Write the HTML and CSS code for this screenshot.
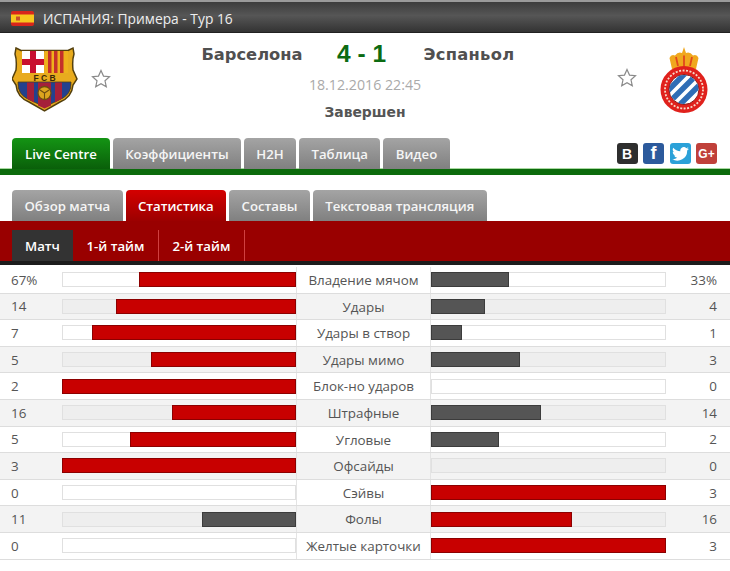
FILE: index.html
```html
<!DOCTYPE html>
<html lang="ru">
<head>
<meta charset="utf-8">
<title>Барселона 4 - 1 Эспаньол</title>
<link rel="stylesheet" href="styles.css">
</head>
<body>
<div class="page">
  <div class="league">
    <svg class="flag" width="23" height="15" viewBox="0 0 23 15"><rect width="23" height="15" rx="2" fill="#d8261c"/><rect y="3.500" width="23" height="8" fill="#f7c81e"/><rect x="5" y="5.500" width="4" height="4" fill="#c8502a"/></svg>
    <span>ИСПАНИЯ: Примера - Тур 16</span>
  </div>
  <div class="match">
    <svg class="crest-home" width="66" height="66" viewBox="0 0 66 66">
      <path d="M4 2 L9 4.500 H56 L61 2 L62 8 Q60 14 61 24 L65 33 L61 39 Q60 51 48 56 L32.500 65 L17 56 Q5 51 4 39 L0 33 L4 24 Q5 14 3 8 Z" fill="#e8ab1e" stroke="#54400e" stroke-width="1.500"/>
      <rect x="10" y="5" width="22" height="22" fill="#fff"/>
      <path d="M18 5h6v8h8v6h-8v8h-6v-8h-8v-6h8z" fill="#c8102e"/>
      <rect x="33" y="5" width="23" height="22" fill="#eeb11c"/>
      <path d="M36 5h3.500v22H36zM42 5h3.500v22H42zM48 5h3.500v22H48z" fill="#c4302a"/>
      <text x="32.500" y="34.500" class="fcb">F C B</text>
      <path d="M6 36 H59 Q60 49 47 54 L32.500 61 L18 54 Q5 49 6 36 Z" fill="#23418e" stroke="#54400e" stroke-width=".8"/>
      <path d="M15 36.500h7v20l-7-4zM43 36.500h7v16l-7 4z" fill="#a5203a"/>
      <path d="M26 36.500h13v23l-6.500 3-6.500-3z" fill="#a5203a"/>
      <circle cx="32.500" cy="47" r="6.500" fill="#dca51e" stroke="#6e4e10" stroke-width="1.300"/>
      <path d="M28 44l4.500 3 4.500-3M32.500 47v6" stroke="#6e4e10" stroke-width="1.100" fill="none"/>
    </svg>
    <svg class="star star-home" width="20" height="20" viewBox="0 0 20 20"><path d="M10 1.500l2.500 5.600 6 .6-4.500 4.100 1.300 6L10 14.700 4.700 17.800l1.300-6L1.500 7.700l6-.6z" fill="#fff" stroke="#8a8a8a" stroke-width="1.200"/></svg>
    <div class="score-box">
      <div class="teams">
        <span class="team team-a">Барселона</span>
        <span class="score">4 - 1</span>
        <span class="team team-b">Эспаньол</span>
      </div>
      <div class="date">18.12.2016 22:45</div>
      <div class="status">Завершен</div>
    </div>
    <svg class="star star-away" width="20" height="20" viewBox="0 0 20 20"><path d="M10 1.500l2.500 5.600 6 .6-4.500 4.100 1.300 6L10 14.700 4.700 17.800l1.300-6L1.500 7.700l6-.6z" fill="#fff" stroke="#8a8a8a" stroke-width="1.200"/></svg>
    <svg class="crest-away" width="48" height="67" viewBox="0 0 48 67">
      <path d="M12 23 L9.500 12 Q11 8 15 9.500 Q18 5.500 22 7 L24 1 L26 7 Q30 5.500 33 9.500 Q37 8 38.500 12 L36 23 Z" fill="#f0a81e"/>
      <path d="M16 11l2 9M24 9.500v10.500M32 11l-2 9" stroke="#e2481c" stroke-width="1.800"/>
      <circle cx="24" cy="43.500" r="23.500" fill="#e0211c"/>
      <circle cx="24" cy="43.500" r="15" fill="#fff" stroke="#8c1512" stroke-width="1"/>
      <clipPath id="c"><circle cx="24" cy="43.500" r="14.500"/></clipPath>
      <g clip-path="url(#c)" stroke="#2f6db5" stroke-width="5.500">
        <path d="M6 46.500 L26 26.500M13 52.500 L33 32.500M20 58.500 L40 38.500"/>
      </g>
      <circle cx="24" cy="43.500" r="19" fill="none" stroke="#f7d9c8" stroke-width="1.800" stroke-dasharray="2 1.500"/>
    </svg>
  </div>
  <div class="main-tabs">
    <div class="tabs">
      <span class="tab tab-green">Live Centre</span>
      <span class="tab">Коэффициенты</span>
      <span class="tab">H2H</span>
      <span class="tab">Таблица</span>
      <span class="tab">Видео</span>
    </div>
    <div class="social">
      <span class="soc soc-vk">B</span>
      <span class="soc soc-fb">f</span>
      <span class="soc soc-tw"><svg width="17" height="14" viewBox="0 0 24 20"><path d="M24 2.400a9.800 9.800 0 0 1-2.800.8A4.900 4.900 0 0 0 23.300.5a9.800 9.800 0 0 1-3.100 1.200A4.900 4.900 0 0 0 11.800 6.100 14 14 0 0 1 1.700 1a4.900 4.900 0 0 0 1.500 6.500 4.900 4.900 0 0 1-2.200-.6 4.900 4.900 0 0 0 3.900 4.900 4.900 4.900 0 0 1-2.200.1 4.900 4.900 0 0 0 4.600 3.400A9.900 9.900 0 0 1 0 17.300 14 14 0 0 0 21.500 4.900 10 10 0 0 0 24 2.400z" fill="#fff"/></svg></span>
      <span class="soc soc-gp">G+</span>
    </div>
  </div>
  <div class="sub-tabs">
    <span class="tab">Обзор матча</span>
    <span class="tab tab-red">Статистика</span>
    <span class="tab">Составы</span>
    <span class="tab">Текстовая трансляция</span>
  </div>
  <div class="band">
    <span class="period period-active">Матч</span>
    <span class="period">1-й тайм</span>
    <span class="period">2-й тайм</span>
  </div>
  <div class="stats">
    <div class="row"><span class="val">67%</span><div class="track track-l"><i class="fill red" style="width:67%"></i></div><span class="name">Владение мячом</span><div class="track"><i class="fill gray" style="width:33%"></i></div><span class="val val-r">33%</span></div>
    <div class="row"><span class="val">14</span><div class="track track-l"><i class="fill red" style="width:77%"></i></div><span class="name">Удары</span><div class="track"><i class="fill gray" style="width:23%"></i></div><span class="val val-r">4</span></div>
    <div class="row"><span class="val">7</span><div class="track track-l"><i class="fill red" style="width:87%"></i></div><span class="name">Удары в створ</span><div class="track"><i class="fill gray" style="width:13%"></i></div><span class="val val-r">1</span></div>
    <div class="row"><span class="val">5</span><div class="track track-l"><i class="fill red" style="width:62%"></i></div><span class="name">Удары мимо</span><div class="track"><i class="fill gray" style="width:38%"></i></div><span class="val val-r">3</span></div>
    <div class="row"><span class="val">2</span><div class="track track-l"><i class="fill red" style="width:100%"></i></div><span class="name">Блок-но ударов</span><div class="track"></div><span class="val val-r">0</span></div>
    <div class="row"><span class="val">16</span><div class="track track-l"><i class="fill red" style="width:53%"></i></div><span class="name">Штрафные</span><div class="track"><i class="fill gray" style="width:47%"></i></div><span class="val val-r">14</span></div>
    <div class="row"><span class="val">5</span><div class="track track-l"><i class="fill red" style="width:71%"></i></div><span class="name">Угловые</span><div class="track"><i class="fill gray" style="width:29%"></i></div><span class="val val-r">2</span></div>
    <div class="row"><span class="val">3</span><div class="track track-l"><i class="fill red" style="width:100%"></i></div><span class="name">Офсайды</span><div class="track"></div><span class="val val-r">0</span></div>
    <div class="row"><span class="val">0</span><div class="track track-l"></div><span class="name">Сэйвы</span><div class="track"><i class="fill red" style="width:100%"></i></div><span class="val val-r">3</span></div>
    <div class="row"><span class="val">11</span><div class="track track-l"><i class="fill gray" style="width:40%"></i></div><span class="name">Фолы</span><div class="track"><i class="fill red" style="width:60%"></i></div><span class="val val-r">16</span></div>
    <div class="row"><span class="val">0</span><div class="track track-l"></div><span class="name">Желтые карточки</span><div class="track"><i class="fill red" style="width:100%"></i></div><span class="val val-r">3</span></div>
  </div>
</div>
</body>
</html>
```
FILE: styles.css
```css
* { box-sizing: border-box; }
html, body { margin: 0; padding: 0; background: #fff; }
body { font-family: "Open Sans", "Liberation Sans", sans-serif; color: #555; overflow: hidden; }
.page { width: 730px; height: 571px; display: flex; flex-direction: column; }

.league { height: 33px; flex: none; display: flex; align-items: center; gap: 9px; padding: 2px 0 0 11px; border-top: 2px solid #9a9a9a; border-bottom: 1px solid #222; background: linear-gradient(#3c3c3c, #565656 45%, #333); color: #eee; font-size: 13.800px; }
.flag { flex: none; }

.match { height: 105px; flex: none; display: flex; padding: 13px 0 0 12px; }
.crest-home { flex: none; }
.fcb { font-family: "Liberation Sans", sans-serif; font-weight: 700; font-size: 8.500px; fill: #3a2a08; text-anchor: middle; }
.star { flex: none; }
.star-home { margin: 23px 0 0 13px; }
.star-away { margin: 22px 0 0 2px; }
.crest-away { flex: none; margin: 0 0 0 23px; }
.score-box { width: 504px; flex: none; display: flex; flex-direction: column; align-items: center; }
.teams { display: flex; align-items: center; height: 24px; margin-top: -4px; }
.team { font-family: "DejaVu Sans", sans-serif; font-weight: 700; font-size: 16.300px; color: #505050; width: 120px; }
.team-a { text-align: right; margin-right: 7px; }
.team-b { text-align: left; margin-left: 10px; letter-spacing: .3px; }
.score { font-family: "Liberation Sans", sans-serif; font-weight: 700; font-size: 24.500px; color: #0c6b12; width: 104px; text-align: center; }
.date { font-size: 14.200px; color: #aaa; margin-top: 9px; padding-left: 4px; }
.status { font-family: "DejaVu Sans", sans-serif; font-weight: 700; font-size: 13.900px; color: #555; margin-top: 10px; padding-left: 4px; }

.main-tabs { flex: none; height: 37px; display: flex; justify-content: space-between; border-bottom: 6px solid #0c6b0c; padding: 0 13px 0 12px; box-shadow: inset 0 -1px 0 #a8d8a0; }
.tabs, .sub-tabs { display: flex; gap: 3px; align-items: flex-start; }
.tab { height: 31px; padding: 0 12.400px; display: flex; align-items: center; border-radius: 4px 4px 0 0; background: linear-gradient(#a4a4a4, #808080); color: #f5f5f5; font-size: 13.200px; font-weight: 600; white-space: nowrap; }
.tab-green { padding: 0 13px; background: linear-gradient(#149414, #0a5f0a); color: #fff; }
.tab-red { background: linear-gradient(#d40000, #9c0000); color: #fff; }
.social { display: flex; gap: 5.500px; padding-top: 5px; }
.soc { width: 21px; height: 21px; border-radius: 3px; display: flex; align-items: center; justify-content: center; color: #fff; font-family: "Liberation Sans", sans-serif; font-weight: 700; font-size: 14px; }
.soc-vk { background: #2e2e2e; }
.soc-fb { background: #2c5a9c; font-size: 18px; }
.soc-tw { background: #2ba1d8; }
.soc-gp { background: #c0403a; font-size: 12px; }

.sub-tabs { flex: none; height: 31px; margin-top: 15px; padding-left: 12px; }
.band { flex: none; height: 44px; display: flex; padding: 9px 0 0 12px; background: #990000; border-bottom: 4px solid #1c1c1c; }
.period { height: 31px; padding: 0 13.500px; display: flex; align-items: center; color: #fff; font-size: 13.200px; font-weight: 600; border-right: 1px solid #d04040; }
.period-active { width: 61px; padding: 0 0 0 13px; background: #333; border: 0; }

.stats { flex: none; padding-top: 2px; }
.row { height: 26.600px; display: flex; align-items: center; border-bottom: 1px solid #ddd; font-size: 13.400px; }
.row:nth-child(even) { background: #f3f3f3; }
.val { width: 62px; padding-left: 11px; flex: none; color: #555; }
.val-r { width: 64px; padding: 0 13px 0 0; text-align: right; }
.track { width: 235px; height: 15px; flex: none; display: flex; background: #fff; box-shadow: inset 0 0 0 1px #e0e0e0; }
.row:nth-child(even) .track { background: #eee; }
.track-l { justify-content: flex-end; width: 234px; }
.fill { display: block; height: 15px; }
.red { background: #c80000; box-shadow: inset 0 0 0 1px #8c0000; }
.gray { background: #555; box-shadow: inset 0 0 0 1px #3c3c3c; }
.name { width: 135px; height: 100%; flex: none; text-align: center; line-height: 26px; color: #555; white-space: nowrap; border-left: 1px solid #e4e4e4; border-right: 1px solid #e4e4e4; }
```
